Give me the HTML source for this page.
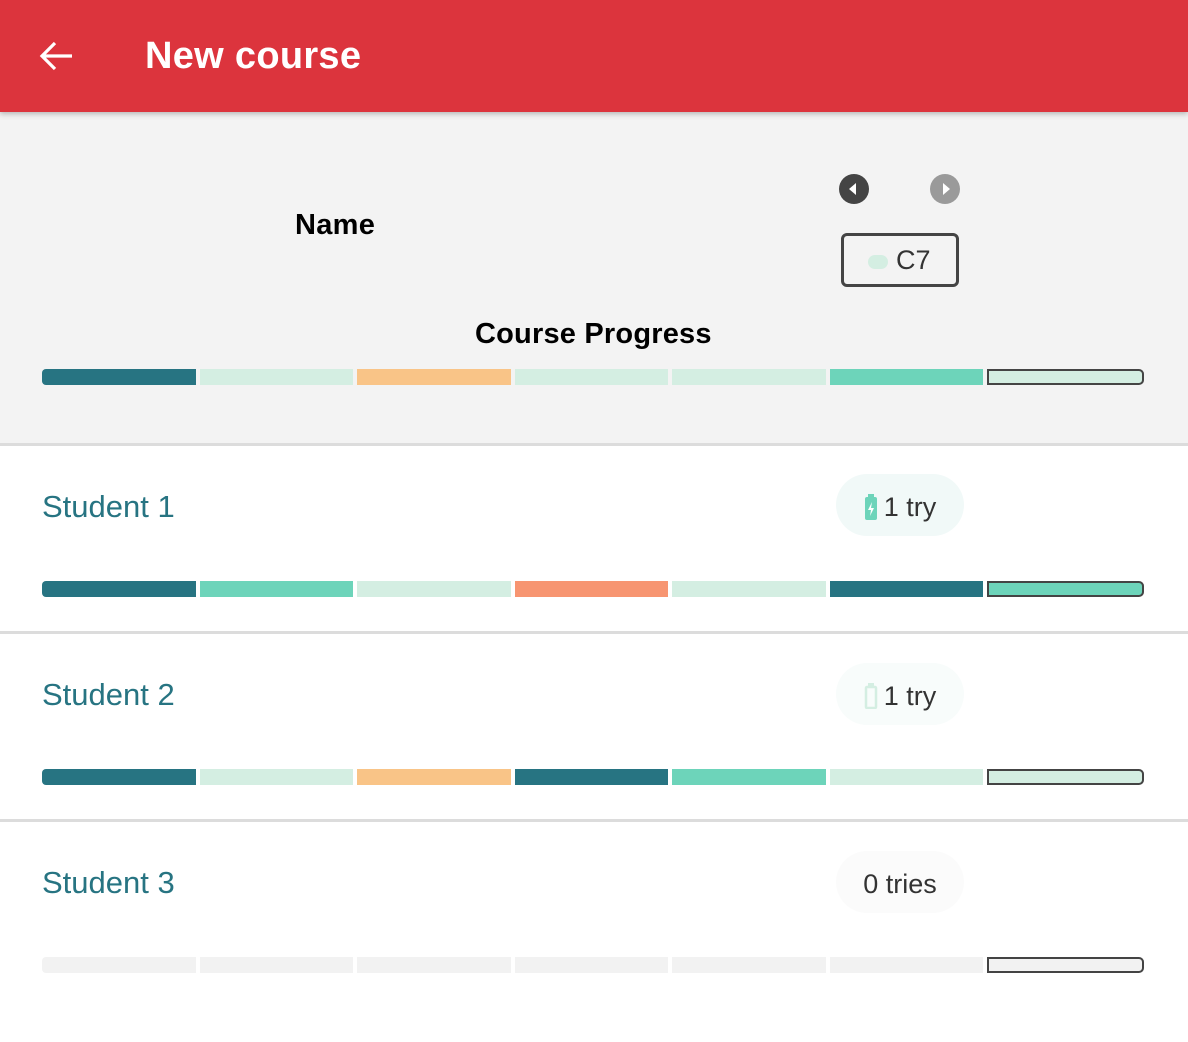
<!DOCTYPE html>
<html><head><style>
*{margin:0;padding:0;box-sizing:border-box}
body{width:1188px;height:1042px;background:#fff;font-family:"Liberation Sans",sans-serif;position:relative;overflow:hidden}
.a{position:absolute}
.hdr{left:0;top:0;width:1188px;height:112px;background:#dc343d;box-shadow:0 2px 5px rgba(0,0,0,.25);z-index:2}
.panel{left:0;top:112px;width:1188px;height:331px;background:#f3f3f3}
.line{left:0;width:1188px;height:3px;background:#dcdcdc}
.seg{position:absolute;height:16px}
.name{left:42px;font-size:31px;color:#277482}
.pill{left:836px;width:128px;height:62px;border-radius:31px;font-size:27px;color:#333;display:flex;align-items:center;justify-content:center;padding-top:4px}
</style></head><body>
<div class="a hdr">
<svg class="a" style="left:38px;top:38px" width="36" height="36" viewBox="0 0 36 36"><path d="M34 18H5M17 5L4 18l13 13" stroke="#fff" stroke-width="3.2" fill="none"/></svg>
<div class="a" style="left:145px;top:35px;font-size:38px;color:#fff;font-weight:bold;letter-spacing:0.3px">New course</div>
</div>
<div class="a panel"></div>
<div class="a" style="left:295px;top:209px;font-size:29px;font-weight:bold;letter-spacing:0.3px">Name</div>
<svg class="a" style="left:839px;top:174px" width="30" height="30"><circle cx="15" cy="15" r="15" fill="#444"/><path d="M17 9v12l-7-6z" fill="#fff"/></svg>
<svg class="a" style="left:930px;top:174px" width="30" height="30"><circle cx="15" cy="15" r="15" fill="#9a9a9a"/><path d="M13 9v12l7-6z" fill="#fff"/></svg>
<div class="a" style="left:841px;top:233px;width:118px;height:54px;border:3px solid #444;border-radius:6px"></div>
<div class="a" style="left:868px;top:255px;width:20px;height:14px;border-radius:7px;background:#d4eee2"></div>
<div class="a" style="left:896px;top:245px;font-size:27px;color:#333">C7</div>
<div class="a" style="left:475px;top:318px;font-size:29px;font-weight:bold;letter-spacing:0.2px">Course Progress</div>
<div class="a line" style="top:443px"></div>
<div class="a line" style="top:631px"></div>
<div class="a line" style="top:819px"></div>
<div class="a name" style="top:489px">Student 1</div>
<div class="a name" style="top:677px">Student 2</div>
<div class="a name" style="top:865px">Student 3</div>
<div class="a pill" style="top:474px;background:#f1f9f8"><svg width="14" height="26" style="margin-right:6px"><rect x="1" y="3" width="12" height="23" rx="2" fill="#6dd4ba"/><rect x="4" y="0" width="6" height="4" fill="#6dd4ba"/><path d="M8 8l-4 8h3l-1 6 4-8H7z" fill="#fff"/></svg>1 try</div>
<div class="a pill" style="top:663px;background:#f8fcfb"><svg width="14" height="26" style="margin-right:6px"><rect x="2" y="4" width="10" height="21" rx="1" fill="none" stroke="#d4eee2" stroke-width="2.5"/><rect x="4" y="0" width="6" height="4" fill="#d4eee2"/></svg>1 try</div>
<div class="a pill" style="top:851px;background:#fbfbfb">0 tries</div>
<div id="bars"></div>
<script>
var X=[[42,154],[200,153],[357,154],[515,153],[672,154],[830,153],[987,157]];
var C={d:'#277482',l:'#d4eee2',o:'#f9c487',t:'#6dd4ba',s:'#f79571',e:'#f2f2f2'};
var rows=[[369,['d','l','o','l','l','t','l']],[581,'dtlsldt'.split('')],[769,'dlodtll'.split('')],[957,'eeeeeee'.split('')]];
var h='';
rows.forEach(function(r){r[1].forEach(function(c,i){var st='left:'+X[i][0]+'px;top:'+r[0]+'px;width:'+X[i][1]+'px;background:'+C[c]+';';
if(i==0)st+='border-radius:4px 0 0 4px;';
if(i==6)st+='border:2px solid #444;border-radius:0 5px 5px 0;';
h+='<div class="seg" style="'+st+'"></div>';});});
document.getElementById('bars').innerHTML=h;
</script>
</body></html>
